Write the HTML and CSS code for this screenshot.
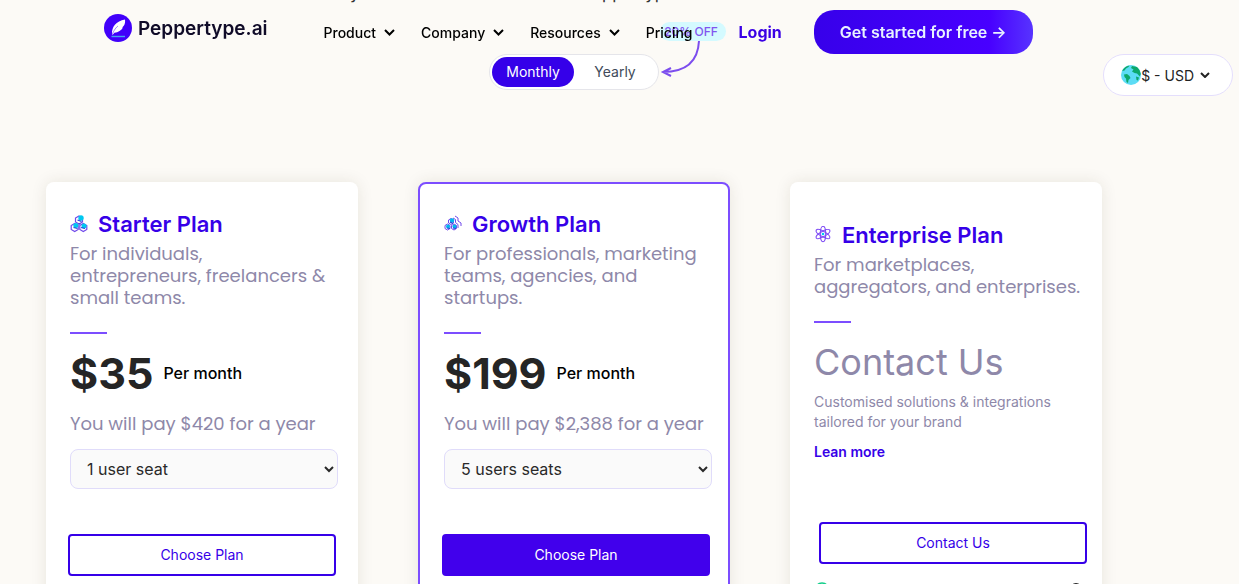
FILE: index.html
```html
<!DOCTYPE html>
<html lang="en">
<head>
    <meta charset="UTF-8">
    <meta name="viewport" content="width=device-width, initial-scale=1.0">
    <title>Pricing - Peppertype.ai</title>
    <link rel="stylesheet" href="styles.css">
</head>
<body>
    <header class="site-header">
        <a class="logo" href="#">
            <svg width="28" height="28" viewBox="0 0 28 28" aria-hidden="true">
                <circle cx="14" cy="14" r="14" fill="#4100fa"/>
                <path d="M8 20.500C7.500 13 12 7 21 5.500C21.500 10 20 12 18 13.500L19 13.600C17.500 16.500 14 18.500 10.500 18.700L8.500 21Z" fill="#fff"/>
                <path d="M8 21C10 16 12 13.500 14 12" fill="none" stroke="#4100fa" stroke-width="0.500"/>
                <path d="M7.500 22.500H21" stroke="#45a5ee" stroke-width="1.400"/>
            </svg>
            <span>Peppertype.ai</span>
        </a>
        <nav class="main-nav">
            <a href="#">Product
                <svg class="chevron" width="11" height="7" viewBox="0 0 11 7"><path d="M1 1l4.500 4.500L10 1"/></svg>
            </a>
            <a href="#">Company
                <svg class="chevron" width="11" height="7" viewBox="0 0 11 7"><path d="M1 1l4.500 4.500L10 1"/></svg>
            </a>
            <a href="#">Resources
                <svg class="chevron" width="11" height="7" viewBox="0 0 11 7"><path d="M1 1l4.500 4.500L10 1"/></svg>
            </a>
            <a href="#">Pricing</a>
        </nav>
        <a class="login" href="#">Login</a>
        <a class="cta" href="#">Get started for free →</a>
    </header>

    <button class="currency" type="button">
        <svg width="20" height="20" viewBox="0 0 20 20" aria-hidden="true">
            <circle cx="10" cy="10" r="10" fill="#5cdcf5"/>
            <path d="M1.500 5C3.500 2 6 .8 8.500 .4L7.500 2L5 3.500L3.500 5.500L1.500 6ZM3 9.500L6 9L8.500 11L9.500 13L7.500 15L7 18L5.500 17L5 13.500L3.500 12ZM11 1L16 2L18.500 5L19.800 9L18.500 11.500L17.500 10L16 8.500L13.500 8L11 6.500L12.500 4.500L10 3ZM15 11.500L18 12.500L17 15.500L15.500 15Z" fill="#0da86c"/>
        </svg>
        <span>$ - USD</span>
        <svg class="chevron" width="10" height="6" viewBox="0 0 10 6"><path d="M1 1l4 4 4-4"/></svg>
    </button>

    <main>
        <p class="intro">Try these to see the value that Peppertype can do for teams</p>

        <div class="billing">
            <div class="toggle">
                <button class="toggle-option active" type="button">Monthly</button>
                <button class="toggle-option" type="button">Yearly</button>
            </div>
            <div class="discount">
                <span class="discount-label">20% OFF</span>
                <svg class="discount-arrow" width="42" height="38" viewBox="0 0 42 38" aria-hidden="true">
                    <path d="M39 0C38 20 26 31 3 31M11 27L3 31L11 35"/>
                </svg>
            </div>
        </div>

        <section class="plans">
            <article class="card">
                <h2>
                    <svg width="18" height="18" viewBox="0 0 18 18" aria-hidden="true">
                        <g fill="#fff" stroke="#7048ea" stroke-width="1.200">
                            <path d="M9 1l3.500 2v4L9 9L5.500 7V3Z"/>
                            <path d="M4.700 8.500l3.500 2v4l-3.500 2l-3.500-2v-4Z"/>
                            <path d="M13.300 8.500l3.500 2v4l-3.500 2l-3.500-2v-4Z"/>
                        </g>
                        <g fill="#00c8f0">
                            <circle cx="11" cy="3" r="2.700"/>
                            <circle cx="5.800" cy="10.500" r="2.500"/>
                            <circle cx="14" cy="11" r="2.500"/>
                        </g>
                        <path d="M7.500 5l4 1.500M3.500 12.500l4 1M11 12.500l4 1M8.300 9h2" stroke="#2442db" stroke-width="1.200"/>
                    </svg>
                    Starter Plan
                </h2>
                <p class="description">For individuals, entrepreneurs, freelancers &amp; small teams.</p>
                <hr>
                <div class="price"><strong>$35</strong> <span>Per month</span></div>
                <p class="yearly">You will pay $420 for a year</p>
                <select aria-label="Starter plan seats">
                    <option>1 user seat</option>
                </select>
                <button class="choose" type="button">Choose Plan</button>
            </article>

            <article class="card featured">
                <h2>
                    <svg width="18" height="18" viewBox="0 0 18 18" aria-hidden="true">
                        <g fill="#fff" stroke="#7048ea" stroke-width="1">
                            <path d="M7 3.500l2.500 1.500v3L7 9.500L4.500 8v-3Z"/>
                            <path d="M3.500 9L6 10.500v3l-2.500 1.500L1 13.500v-3Z"/>
                            <path d="M10 9l2.500 1.500v3L10 15L7.500 13.500v-3Z"/>
                            <path d="M9 3l2.500 1.500v3l2.500 2v3.500M11 1l3 2v3l3 2v3" fill="none"/>
                        </g>
                        <g fill="#00b8ee">
                            <circle cx="8" cy="5.500" r="2.200"/>
                            <circle cx="4" cy="11.500" r="2"/>
                            <circle cx="10.500" cy="11.500" r="2"/>
                        </g>
                        <path d="M6 7l3 1.500M3 13l3 .5M9 13l3 .5" stroke="#2442db" stroke-width="1.200"/>
                    </svg>
                    Growth Plan
                </h2>
                <p class="description">For professionals, marketing teams, agencies, and startups.</p>
                <hr>
                <div class="price"><strong>$199</strong> <span>Per month</span></div>
                <p class="yearly">You will pay $2,388 for a year</p>
                <select aria-label="Growth plan seats">
                    <option>5 users seats</option>
                </select>
                <button class="choose filled" type="button">Choose Plan</button>
            </article>

            <article class="card enterprise">
                <h2>
                    <svg width="18" height="18" viewBox="0 0 18 18" aria-hidden="true">
                        <g fill="none" stroke="#7f4cf5" stroke-width="1.100">
                            <ellipse cx="9" cy="8" rx="2.700" ry="7.800"/>
                            <ellipse cx="9" cy="8" rx="2.700" ry="7.800" transform="rotate(60 9 8)"/>
                            <ellipse cx="9" cy="8" rx="2.700" ry="7.800" transform="rotate(120 9 8)"/>
                        </g>
                        <circle cx="9" cy="8" r="1.300" fill="#00c8f0"/>
                    </svg>
                    Enterprise Plan
                </h2>
                <p class="description">For marketplaces, aggregators, and enterprises.</p>
                <hr>
                <p class="contact-title">Contact Us</p>
                <p class="custom">Customised solutions &amp; integrations tailored for your brand</p>
                <a class="learn-more" href="#">Lean more</a>
                <button class="choose" type="button">Contact Us</button>
                <div class="feature">
                    <svg width="16" height="16" viewBox="0 0 16 16" aria-hidden="true">
                        <circle cx="8" cy="8" r="7" fill="none" stroke="#12ce8a" stroke-width="1.500"/>
                        <path d="M5 8l2 2 4-4" fill="none" stroke="#12ce8a" stroke-width="1.500"/>
                    </svg>
                    <span>Includes all Growth features</span>
                    <svg width="12" height="16" viewBox="0 0 12 16" aria-hidden="true">
                        <circle cx="6" cy="7" r="6" fill="#222"/>
                        <path d="M6 6v4M6 3v2" stroke="#fff" stroke-width="1.500"/>
                    </svg>
                </div>
            </article>
        </section>
    </main>
</body>
</html>
```

FILE: styles.css
```css
* {
    box-sizing: border-box;
}

body {
    margin: 0;
    font-family: Inter, Arial, sans-serif;
    color: #000;
    background: #fcfaf6;
    overflow: hidden;
}

a {
    color: inherit;
    text-decoration: none;
}

h2, p {
    margin: 0;
}

button, select {
    font-family: inherit;
    cursor: pointer;
}

.site-header {
    position: fixed;
    top: 0;
    left: 0;
    z-index: 10;
    width: 100%;
    height: 64px;
    padding-left: 104px;
    display: flex;
    align-items: center;
}

.logo {
    display: flex;
    align-items: center;
    gap: 6px;
    margin: 0 56px 8px 0;
    font-size: 19px;
    font-weight: 600;
    color: #100b28;
}

.main-nav {
    display: flex;
    gap: 26px;
    font-size: 14px;
    font-weight: 500;
}

.main-nav a {
    display: flex;
    align-items: center;
    gap: 8px;
}

.chevron {
    fill: none;
    stroke: currentColor;
    stroke-width: 2;
}

.login {
    margin-left: 46px;
    font-size: 16px;
    font-weight: 700;
    color: #3a00e5;
}

.cta {
    margin-left: 32px;
    padding: 0 26px;
    border-radius: 20px;
    font-size: 16px;
    font-weight: 600;
    line-height: 44px;
    color: #e8f1ff;
    background: linear-gradient(90deg, #3700ea, #4800ff 80%, #5733ff);
}

.currency {
    position: fixed;
    top: 54px;
    right: 6px;
    z-index: 10;
    height: 42px;
    padding: 0 22px 0 17px;
    display: flex;
    align-items: center;
    border: 1px solid #e4defc;
    border-radius: 21px;
    font-size: 14px;
    color: #222;
    background: #fff;
}

.currency .chevron {
    margin-left: 6px;
}

/* the page is scrolled a little, the intro is almost out of view */
.intro {
    margin: -17px 90px 0 0;
    font-size: 17px;
    line-height: 20px;
    text-align: center;
    color: #333;
}

.billing {
    position: relative;
    width: 170px;
    margin: 51px 0 0 489px;
}

.toggle {
    display: flex;
    height: 36px;
    padding: 2px;
    border: 1px solid #e5e5ea;
    border-radius: 18px;
    background: #fff;
}

.toggle-option {
    flex: 1;
    padding: 0 0 2px;
    border: 0;
    border-radius: 16px;
    font-size: 14px;
    color: #414b5a;
    background: none;
}

.toggle-option.active {
    color: #fff;
    background: #3500e9;
}

.discount {
    position: absolute;
    top: -32px;
    left: 171px;
}

.discount-label {
    display: block;
    width: 66px;
    padding-right: 4px;
    border-radius: 10px;
    font-size: 12px;
    font-weight: 500;
    line-height: 19px;
    text-align: center;
    color: #8155ef;
    background: #d4faff;
}

.discount-arrow {
    display: block;
    fill: none;
    stroke: #7c4dee;
    stroke-width: 2;
}

.plans {
    display: grid;
    grid-template-columns: repeat(3, 312px);
    gap: 60px;
    margin: 92px 0 0 46px;
}

.card {
    display: flex;
    flex-direction: column;
    min-height: 480px;
    padding: 28px 20px 24px 24px;
    border-radius: 8px;
    background: #fff;
    box-shadow: 0 0 16px rgba(60, 50, 20, 0.1);
}

.card.featured {
    padding: 26px 16px 24px 24px;
    border: 2px solid #7c4dff;
}

.card.enterprise {
    padding-top: 39px;
}

.card h2 {
    display: flex;
    align-items: center;
    gap: 10px;
    font-size: 22px;
    font-weight: 600;
    line-height: 28px;
    color: #3600e8;
}

.description {
    margin-top: 5px;
    font-family: Poppins, Inter, sans-serif;
    font-size: 18px;
    line-height: 22px;
    color: #8e88a9;
}

.card hr {
    width: 37px;
    height: 2px;
    margin: 23px 0 0;
    border: 0;
    background: #7c4dff;
}

.price {
    display: flex;
    align-items: center;
    gap: 10px;
    margin-top: 12px;
    font-size: 16px;
    font-weight: 500;
}

.price strong {
    font-size: 43px;
    font-weight: 700;
    line-height: 54px;
    color: #252525;
}

.yearly {
    margin-top: 13px;
    font-family: Poppins, Inter, sans-serif;
    font-size: 18px;
    line-height: 22px;
    color: #8e88a9;
}

.card select {
    width: 268px;
    height: 40px;
    margin-top: 14px;
    padding: 0 0 0 12px;
    border: 1px solid #e0dcfa;
    border-radius: 8px;
    font-size: 16px;
    color: #292929;
    background: #fafafa;
}

.choose {
    width: 268px;
    height: 42px;
    margin: 45px 0 0 -2px;
    padding: 0 0 2px;
    border: 2px solid #3600e8;
    border-radius: 4px;
    font-size: 14px;
    color: #3600e8;
    background: #fff;
}

.choose.filled {
    color: #fff;
    border-color: #4100ec;
    background: #4100ec;
}

.contact-title {
    margin-top: 16px;
    font-size: 36px;
    line-height: 46px;
    color: #8e88a9;
}

.custom {
    margin-top: 7px;
    font-size: 14px;
    line-height: 20px;
    color: #8e88a9;
}

.learn-more {
    margin-top: 10px;
    font-size: 14px;
    font-weight: 600;
    line-height: 20px;
    color: #3600e8;
}

.enterprise .choose {
    margin: 60px 0 0 5px;
}

.feature {
    display: flex;
    align-items: center;
    gap: 18px;
    margin-top: 16px;
    font-size: 14px;
    line-height: 20px;
    color: #333;
}

.feature span {
    flex: 1;
}
```
